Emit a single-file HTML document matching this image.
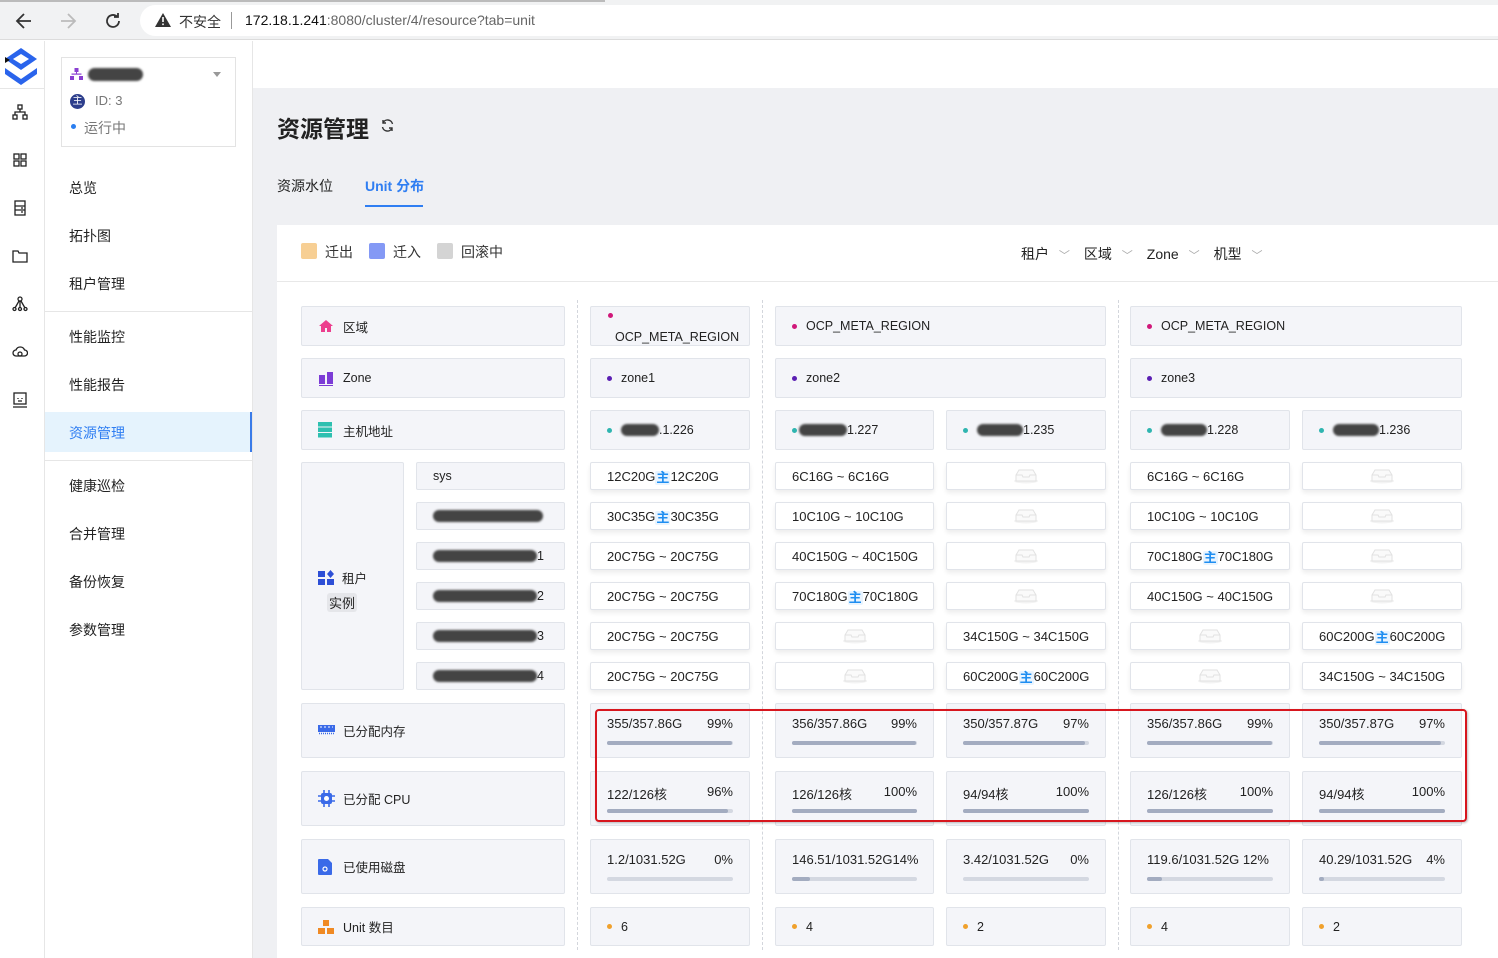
<!DOCTYPE html>
<html><head><meta charset="utf-8">
<style>
*{box-sizing:border-box;margin:0;padding:0}
body{width:1498px;height:958px;overflow:hidden;position:relative;background:#fff;font-family:"Liberation Sans","Noto Sans CJK SC",sans-serif;color:#333;font-size:12px}
.a{position:absolute}
.c{position:absolute;background:#f4f5f9;border:1px solid #e1e4ea;border-radius:2px;display:flex;align-items:center;padding-left:16px;font-size:12.5px;color:#222}
.u{position:absolute;background:#fff;border:1px solid #e1e4ea;border-radius:2px;box-shadow:0 3px 5px rgba(0,0,0,.07);display:flex;align-items:center;justify-content:flex-start;padding-left:16px;font-size:13px;color:#222;white-space:nowrap}
.u.e{justify-content:center;padding-left:0}
.dot{display:inline-block;width:5px;height:5px;border-radius:50%;margin-right:9px}
.blur{display:inline-block;background:#444;border-radius:8px;height:12px;filter:blur(1px)}
.s{position:absolute;background:#f4f5f9;border:1px solid #e1e4ea;border-radius:2px;font-size:13px;color:#222}
.s .t{position:absolute;left:16px;right:16px;top:12px;display:flex;justify-content:space-between}
.s .b{position:absolute;left:16px;right:16px;top:37px;height:4px;background:#d4d8e1;border-radius:2px}
.s .b i{display:block;height:4px;background:#a3acc0;border-radius:2px}
.m{position:absolute;left:69px;font-size:14px;color:#222}
.ri{position:absolute;left:12px;width:16px;height:16px}
.zhu{display:inline-block;color:#1f8ef1;font-weight:bold;font-size:13px;background:#e8f4ff;border-radius:2px;padding:0 1px;line-height:14px;margin-top:4px}
.dash{position:absolute;top:300px;height:650px;border-left:1px dashed #d3d6dc}
</style></head><body>
<div class="a" style="left:0;top:0;width:1498px;height:40px;background:#f1f2f3;border-bottom:1px solid #dcdcdc"></div>
<div class="a" style="left:0;top:0;width:605px;height:2px;background:#bbb"></div>
<div class="a" style="left:140px;top:5px;width:1358px;height:31px;background:#fff;border-radius:16px 0 0 16px"></div>
<svg class="a" style="left:14px;top:11px" width="20" height="20" viewBox="0 0 20 20"><path d="M17 10H4M10 3L3 10l7 7" stroke="#333" stroke-width="1.8" fill="none"/></svg>
<svg class="a" style="left:58px;top:11px" width="20" height="20" viewBox="0 0 20 20"><path d="M3 10h13M10 3l7 7-7 7" stroke="#bbb" stroke-width="1.8" fill="none"/></svg>
<svg class="a" style="left:103px;top:11px" width="20" height="20" viewBox="0 0 20 20"><path d="M16 10a6 6 0 1 1-2-4.5M15 2v4h-4" stroke="#333" stroke-width="1.8" fill="none"/></svg>
<svg class="a" style="left:154px;top:12px" width="18" height="16" viewBox="0 0 18 16"><path d="M9 1L17 15H1z" fill="#333"/><rect x="8.2" y="5" width="1.6" height="5" fill="#fff"/><rect x="8.2" y="11.5" width="1.6" height="1.6" fill="#fff"/></svg>
<div class="a" style="left:179px;top:12px;font-size:14px;color:#333">不安全</div>
<div class="a" style="left:231px;top:12px;width:1px;height:17px;background:#999"></div>
<div class="a" style="left:245px;top:12px;font-size:14px;color:#666"><span style="color:#111">172.18.1.241</span>:8080/cluster/4/resource?tab=unit</div>

<div class="a" style="left:0;top:41px;width:45px;height:917px;background:#fff;border-right:1px solid #e6e6e6"></div>
<svg class="a" style="left:2px;top:46px" width="38" height="40" viewBox="0 0 38 40"><path d="M19 2L35 13 19 24 3 13z" fill="#2a64ec"/><path d="M19 8L27 13 19 18 11 13z" fill="#fff"/><path d="M3 22l16 11 16-11 0 6-16 11L3 28z" fill="#2a64ec"/><path d="M3 11l5 3-5 3z" fill="#111"/></svg>
<div class="a" style="left:0;top:88px;width:44px;height:1px;background:#e6e6e6"></div>
<svg class="ri" style="top:104px" viewBox="0 0 16 16" fill="none" stroke="#222" stroke-width="1.3"><rect x="6" y="1" width="4" height="4"/><rect x="1" y="11" width="4" height="4"/><rect x="11" y="11" width="4" height="4"/><path d="M8 5v3M3 11V8h10v3"/></svg>
<svg class="ri" style="top:152px" viewBox="0 0 16 16" fill="none" stroke="#222" stroke-width="1.3"><rect x="2" y="2" width="5" height="5"/><rect x="9" y="2" width="5" height="5"/><rect x="2" y="9" width="5" height="5"/><rect x="9" y="9" width="5" height="5"/></svg>
<svg class="ri" style="top:200px" viewBox="0 0 16 16" fill="none" stroke="#222" stroke-width="1.3"><rect x="3" y="1" width="10" height="14"/><path d="M3 6h10M3 10h10M9 8h2M9 12h2"/></svg>
<svg class="ri" style="top:248px" viewBox="0 0 16 16" fill="none" stroke="#222" stroke-width="1.3"><path d="M1 3h5l1 2h8v9H1z"/></svg>
<svg class="ri" style="top:296px" viewBox="0 0 16 16" fill="none" stroke="#222" stroke-width="1.3"><circle cx="8" cy="3" r="2"/><circle cx="2.5" cy="13" r="1.5"/><circle cx="13.5" cy="13" r="1.5"/><circle cx="8" cy="13" r="1.5"/><path d="M8 5v6M7 5l-4 7M9 5l4 7"/></svg>
<svg class="ri" style="top:344px" viewBox="0 0 16 16" fill="none" stroke="#222" stroke-width="1.3"><path d="M4 12a3 3 0 0 1 0-6 4.5 4.5 0 0 1 8.5 0 3 3 0 0 1 0 6z"/><circle cx="8" cy="10" r="2"/></svg>
<svg class="ri" style="top:392px" viewBox="0 0 16 16" fill="none" stroke="#222" stroke-width="1.3"><rect x="2" y="1" width="12" height="11"/><path d="M1 15h14M6 6v1M10 6v1M6 9h4"/></svg>

<div class="a" style="left:45px;top:41px;width:208px;height:917px;background:#fff;border-right:1px solid #e6e6e6"></div>
<div class="a" style="left:61px;top:57px;width:175px;height:90px;border:1px solid #e3e3e3"></div>
<svg class="a" style="left:70px;top:68px" width="13" height="13" viewBox="0 0 13 13" fill="#8a3fd1"><rect x="4.5" y="0" width="4" height="4"/><rect x="0" y="8" width="4" height="4"/><rect x="9" y="8" width="4" height="4"/><rect x="1.5" y="5.5" width="10" height="1.2"/><rect x="6" y="3" width="1" height="3"/></svg>
<span class="a blur" style="left:88px;top:68px;width:55px;height:13px"></span>
<div class="a" style="left:213px;top:72px;border:4px solid transparent;border-top:5px solid #999"></div>
<div class="a" style="left:70px;top:94px;width:15px;height:15px;border-radius:50%;background:#2d3e8c;color:#fff;font-size:10px;text-align:center;line-height:15px">主</div>
<div class="a" style="left:95px;top:93px;font-size:13px;color:#777">ID: 3</div>
<div class="a" style="left:71px;top:124px;width:5px;height:5px;border-radius:50%;background:#2a7ef0"></div>
<div class="a" style="left:84px;top:118px;font-size:14px;color:#777">运行中</div>
<div class="m" style="top:178px">总览</div>
<div class="m" style="top:226px">拓扑图</div>
<div class="m" style="top:274px">租户管理</div>
<div class="a" style="left:45px;top:311px;width:207px;height:1px;background:#e6e6e6"></div>
<div class="m" style="top:327px">性能监控</div>
<div class="m" style="top:375px">性能报告</div>
<div class="a" style="left:45px;top:412px;width:207px;height:40px;background:#e5f3fd;border-right:2px solid #3a7be8"></div>
<div class="m" style="top:423px;color:#2f7ef2">资源管理</div>
<div class="a" style="left:45px;top:460px;width:207px;height:1px;background:#e6e6e6"></div>
<div class="m" style="top:476px">健康巡检</div>
<div class="m" style="top:524px">合并管理</div>
<div class="m" style="top:572px">备份恢复</div>
<div class="m" style="top:620px">参数管理</div>

<div class="a" style="left:253px;top:88px;width:1245px;height:870px;background:#eff0f3"></div>
<div class="a" style="left:277px;top:110px;font-size:23px;font-weight:bold;color:#222">资源管理</div>
<svg class="a" style="left:380px;top:118px" width="15" height="15" viewBox="0 0 15 15" fill="none" stroke="#333" stroke-width="1.4"><path d="M12.5 6A5 5 0 0 0 3 5M2.5 9A5 5 0 0 0 12 10"/><path d="M3 2v3h3M12 13v-3H9"/></svg>
<div class="a" style="left:277px;top:176px;font-size:14px;color:#222">资源水位</div>
<div class="a" style="left:365px;top:176px;font-size:14px;color:#2f7ef2;font-weight:bold">Unit 分布</div>
<div class="a" style="left:365px;top:205px;width:58px;height:2px;background:#2f7ef2"></div>

<div class="a" style="left:277px;top:225px;width:1221px;height:733px;background:#fff"></div>
<div class="a" style="left:277px;top:281px;width:1221px;height:1px;background:#e8e8e8"></div>
<div class="a" style="left:301px;top:243px;width:16px;height:16px;background:#f7cf94;border-radius:2px"></div>
<div class="a" style="left:325px;top:242px;font-size:14px">迁出</div>
<div class="a" style="left:369px;top:243px;width:16px;height:16px;background:#8499f5;border-radius:2px"></div>
<div class="a" style="left:393px;top:242px;font-size:14px">迁入</div>
<div class="a" style="left:437px;top:243px;width:16px;height:16px;background:#d4d4d4;border-radius:2px"></div>
<div class="a" style="left:461px;top:242px;font-size:14px">回滚中</div>
<div class="a" style="left:1021px;top:244px;font-size:14px;color:#222">租户 <span style="color:#aaa;font-size:11px;margin:0 14px 0 6px">﹀</span>区域 <span style="color:#aaa;font-size:11px;margin:0 14px 0 6px">﹀</span>Zone <span style="color:#aaa;font-size:11px;margin:0 14px 0 6px">﹀</span>机型 <span style="color:#aaa;font-size:11px;margin-left:6px">﹀</span></div>

<div class="dash" style="left:577px"></div>
<div class="dash" style="left:762px"></div>
<div class="dash" style="left:1118px"></div>

<div class="c" style="left:301px;top:306px;width:264px;height:40px"><svg width="16" height="14" viewBox="0 0 16 14" style="margin-right:9px"><path d="M8 1L1 7h2v6h4V9h2v4h4V7h2z" fill="#ec3f8e"/></svg>区域</div>
<div class="c" style="left:301px;top:358px;width:264px;height:40px"><svg width="16" height="16" viewBox="0 0 16 16" style="margin-right:9px"><rect x="1" y="5" width="6" height="9" fill="#7c3cd6"/><rect x="9" y="2" width="6" height="12" fill="#7c3cd6"/><rect x="1" y="15" width="14" height="1" fill="#7c3cd6"/></svg>Zone</div>
<div class="c" style="left:301px;top:410px;width:264px;height:40px"><svg width="14" height="16" viewBox="0 0 14 16" style="margin-right:11px"><rect x="0" y="0" width="14" height="4.5" fill="#2ec0b0"/><rect x="0" y="5.5" width="14" height="4.5" fill="#2ec0b0"/><rect x="0" y="11" width="14" height="4.5" fill="#2ec0b0"/></svg>主机地址</div>
<div class="c" style="left:301px;top:462px;width:103px;height:228px;display:block;padding:0">
 <div class="a" style="left:16px;top:105px;display:flex;align-items:center"><svg width="16" height="16" viewBox="0 0 16 16" style="margin-right:8px"><rect x="0" y="1" width="7" height="6" fill="#2d4fd6"/><rect x="0" y="9" width="7" height="6" fill="#2d4fd6"/><rect x="9" y="9" width="7" height="6" fill="#2d4fd6"/><path d="M12.5 0l3.5 4-3.5 4-3.5-4z" fill="#2d4fd6"/></svg>租户</div>
 <div class="a" style="left:25px;top:130px;font-size:13px;background:#e5e6ea;border-radius:3px;padding:0 2px">实例</div>
</div>
<div class="c" style="left:416px;top:462px;width:149px;height:28px">sys</div>
<div class="c" style="left:416px;top:502px;width:149px;height:28px"><span class="blur" style="width:110px"></span></div>
<div class="c" style="left:416px;top:542px;width:149px;height:28px"><span class="blur" style="width:104px"></span>1</div>
<div class="c" style="left:416px;top:582px;width:149px;height:28px"><span class="blur" style="width:104px"></span>2</div>
<div class="c" style="left:416px;top:622px;width:149px;height:28px"><span class="blur" style="width:104px"></span>3</div>
<div class="c" style="left:416px;top:662px;width:149px;height:28px"><span class="blur" style="width:104px"></span>4</div>
<div class="c" style="left:301px;top:703px;width:264px;height:55px"><svg width="17" height="11" viewBox="0 0 17 11" style="margin-right:8px"><rect x="0" y="0" width="17" height="7" fill="#3a6ae8"/><path d="M2 2h2M6 2h2M10 2h2M14 2h1" stroke="#fff" stroke-width="1"/><path d="M1 8.5h15" stroke="#3a6ae8" stroke-width="1.5" stroke-dasharray="1 1"/></svg>已分配内存</div>
<div class="c" style="left:301px;top:771px;width:264px;height:55px"><svg width="17" height="17" viewBox="0 0 17 17" style="margin-right:8px"><rect x="3" y="3" width="11" height="11" rx="2" fill="#3a6ae8"/><circle cx="8.5" cy="8.5" r="2.5" fill="#fff"/><path d="M6 0v3M11 0v3M6 14v3M11 14v3M0 6h3M0 11h3M14 6h3M14 11h3" stroke="#3a6ae8" stroke-width="1.6"/></svg>已分配 CPU</div>
<div class="c" style="left:301px;top:839px;width:264px;height:55px"><svg width="15" height="16" viewBox="0 0 15 16" style="margin-right:10px"><path d="M1 0h9l4 4v11a1 1 0 0 1-1 1H1a1 1 0 0 1-1-1V1a1 1 0 0 1 1-1z" fill="#3a6ae8"/><circle cx="7" cy="10" r="2" fill="none" stroke="#fff" stroke-width="1.2"/></svg>已使用磁盘</div>
<div class="c" style="left:301px;top:907px;width:264px;height:39px"><svg width="16" height="14" viewBox="0 0 16 14" style="margin-right:9px"><rect x="5" y="0" width="6" height="6" fill="#f08a24"/><rect x="0" y="8" width="7" height="6" fill="#f08a24"/><rect x="9" y="8" width="7" height="6" fill="#f08a24"/></svg>Unit 数目</div>

<div class="c" style="left:590px;top:306px;width:160px;height:40px;display:block;padding:0"><span class="dot a" style="left:17px;top:6px;background:#d0187a"></span><span class="a" style="left:24px;top:23px">OCP_META_REGION</span></div>
<div class="c" style="left:775px;top:306px;width:331px;height:40px"><span class="dot" style="background:#d0187a"></span>OCP_META_REGION</div>
<div class="c" style="left:1130px;top:306px;width:332px;height:40px"><span class="dot" style="background:#d0187a"></span>OCP_META_REGION</div>
<div class="c" style="left:590px;top:358px;width:160px;height:40px"><span class="dot" style="background:#5b1fb3"></span>zone1</div>
<div class="c" style="left:775px;top:358px;width:331px;height:40px"><span class="dot" style="background:#5b1fb3"></span>zone2</div>
<div class="c" style="left:1130px;top:358px;width:332px;height:40px"><span class="dot" style="background:#5b1fb3"></span>zone3</div>
<div class="c" style="left:590px;top:410px;width:160px;height:40px"><span class="dot" style="background:#2fb5b0"></span><span class="blur" style="width:38px"></span>.1.226</div>
<div class="c" style="left:775px;top:410px;width:159px;height:40px"><span class="dot" style="background:#2fb5b0;margin-right:2px"></span><span class="blur" style="width:48px"></span>1.227</div>
<div class="c" style="left:946px;top:410px;width:160px;height:40px"><span class="dot" style="background:#2fb5b0"></span><span class="blur" style="width:46px"></span>1.235</div>
<div class="c" style="left:1130px;top:410px;width:160px;height:40px"><span class="dot" style="background:#2fb5b0"></span><span class="blur" style="width:46px"></span>1.228</div>
<div class="c" style="left:1302px;top:410px;width:160px;height:40px"><span class="dot" style="background:#2fb5b0"></span><span class="blur" style="width:46px"></span>1.236</div>

<svg width="0" height="0" style="position:absolute"><defs><symbol id="e" viewBox="0 0 26 16"><ellipse cx="13" cy="13" rx="12" ry="2.5" fill="#f3f3f3"/><path d="M3 7l3-5h14l3 5v6H3z" fill="#fafafa" stroke="#e2e2e2"/><path d="M3 7h6l1 2h6l1-2h6" fill="none" stroke="#e2e2e2"/></symbol></defs></svg>
<div class="u" style="left:590px;top:462px;width:160px;height:28px">12C20G<span class="zhu">主</span>12C20G</div>
<div class="u" style="left:590px;top:502px;width:160px;height:28px">30C35G <span class="zhu">主</span>30C35G</div>
<div class="u" style="left:590px;top:542px;width:160px;height:28px">20C75G ~ 20C75G</div>
<div class="u" style="left:590px;top:582px;width:160px;height:28px">20C75G ~ 20C75G</div>
<div class="u" style="left:590px;top:622px;width:160px;height:28px">20C75G ~ 20C75G</div>
<div class="u" style="left:590px;top:662px;width:160px;height:28px">20C75G ~ 20C75G</div>
<div class="u" style="left:775px;top:462px;width:159px;height:28px">6C16G ~ 6C16G</div>
<div class="u" style="left:775px;top:502px;width:159px;height:28px">10C10G ~ 10C10G</div>
<div class="u" style="left:775px;top:542px;width:159px;height:28px">40C150G ~ 40C150G</div>
<div class="u" style="left:775px;top:582px;width:159px;height:28px">70C180G<span class="zhu">主</span>70C180G</div>
<div class="u e" style="left:775px;top:622px;width:159px;height:28px"><svg width="26" height="16"><use href="#e"/></svg></div>
<div class="u e" style="left:775px;top:662px;width:159px;height:28px"><svg width="26" height="16"><use href="#e"/></svg></div>
<div class="u e" style="left:946px;top:462px;width:160px;height:28px"><svg width="26" height="16"><use href="#e"/></svg></div>
<div class="u e" style="left:946px;top:502px;width:160px;height:28px"><svg width="26" height="16"><use href="#e"/></svg></div>
<div class="u e" style="left:946px;top:542px;width:160px;height:28px"><svg width="26" height="16"><use href="#e"/></svg></div>
<div class="u e" style="left:946px;top:582px;width:160px;height:28px"><svg width="26" height="16"><use href="#e"/></svg></div>
<div class="u" style="left:946px;top:622px;width:160px;height:28px">34C150G ~ 34C150G</div>
<div class="u" style="left:946px;top:662px;width:160px;height:28px">60C200G<span class="zhu">主</span>60C200G</div>
<div class="u" style="left:1130px;top:462px;width:160px;height:28px">6C16G ~ 6C16G</div>
<div class="u" style="left:1130px;top:502px;width:160px;height:28px">10C10G ~ 10C10G</div>
<div class="u" style="left:1130px;top:542px;width:160px;height:28px">70C180G<span class="zhu">主</span>70C180G</div>
<div class="u" style="left:1130px;top:582px;width:160px;height:28px">40C150G ~ 40C150G</div>
<div class="u e" style="left:1130px;top:622px;width:160px;height:28px"><svg width="26" height="16"><use href="#e"/></svg></div>
<div class="u e" style="left:1130px;top:662px;width:160px;height:28px"><svg width="26" height="16"><use href="#e"/></svg></div>
<div class="u e" style="left:1302px;top:462px;width:160px;height:28px"><svg width="26" height="16"><use href="#e"/></svg></div>
<div class="u e" style="left:1302px;top:502px;width:160px;height:28px"><svg width="26" height="16"><use href="#e"/></svg></div>
<div class="u e" style="left:1302px;top:542px;width:160px;height:28px"><svg width="26" height="16"><use href="#e"/></svg></div>
<div class="u e" style="left:1302px;top:582px;width:160px;height:28px"><svg width="26" height="16"><use href="#e"/></svg></div>
<div class="u" style="left:1302px;top:622px;width:160px;height:28px">60C200G<span class="zhu">主</span>60C200G</div>
<div class="u" style="left:1302px;top:662px;width:160px;height:28px">34C150G ~ 34C150G</div>

<div class="s" style="left:590px;top:703px;width:160px;height:55px"><div class="t"><span>355/357.86G</span><span>99%</span></div><div class="b"><i style="width:99%"></i></div></div>
<div class="s" style="left:775px;top:703px;width:159px;height:55px"><div class="t"><span>356/357.86G</span><span>99%</span></div><div class="b"><i style="width:99%"></i></div></div>
<div class="s" style="left:946px;top:703px;width:160px;height:55px"><div class="t"><span>350/357.87G</span><span>97%</span></div><div class="b"><i style="width:97%"></i></div></div>
<div class="s" style="left:1130px;top:703px;width:160px;height:55px"><div class="t"><span>356/357.86G</span><span>99%</span></div><div class="b"><i style="width:99%"></i></div></div>
<div class="s" style="left:1302px;top:703px;width:160px;height:55px"><div class="t"><span>350/357.87G</span><span>97%</span></div><div class="b"><i style="width:97%"></i></div></div>
<div class="s" style="left:590px;top:771px;width:160px;height:55px"><div class="t"><span>122/126核</span><span>96%</span></div><div class="b"><i style="width:96%"></i></div></div>
<div class="s" style="left:775px;top:771px;width:159px;height:55px"><div class="t"><span>126/126核</span><span>100%</span></div><div class="b"><i style="width:100%"></i></div></div>
<div class="s" style="left:946px;top:771px;width:160px;height:55px"><div class="t"><span>94/94核</span><span>100%</span></div><div class="b"><i style="width:100%"></i></div></div>
<div class="s" style="left:1130px;top:771px;width:160px;height:55px"><div class="t"><span>126/126核</span><span>100%</span></div><div class="b"><i style="width:100%"></i></div></div>
<div class="s" style="left:1302px;top:771px;width:160px;height:55px"><div class="t"><span>94/94核</span><span>100%</span></div><div class="b"><i style="width:100%"></i></div></div>
<div class="s" style="left:590px;top:839px;width:160px;height:55px"><div class="t"><span>1.2/1031.52G</span><span>0%</span></div><div class="b"><i style="width:0"></i></div></div>
<div class="s" style="left:775px;top:839px;width:159px;height:55px"><div class="t" style="right:8px"><span>146.51/1031.52G14%</span></div><div class="b"><i style="width:14%"></i></div></div>
<div class="s" style="left:946px;top:839px;width:160px;height:55px"><div class="t"><span>3.42/1031.52G</span><span>0%</span></div><div class="b"><i style="width:0"></i></div></div>
<div class="s" style="left:1130px;top:839px;width:160px;height:55px"><div class="t"><span>119.6/1031.52G 12%</span></div><div class="b"><i style="width:12%"></i></div></div>
<div class="s" style="left:1302px;top:839px;width:160px;height:55px"><div class="t"><span>40.29/1031.52G</span><span>4%</span></div><div class="b"><i style="width:4%"></i></div></div>
<div class="c" style="left:590px;top:907px;width:160px;height:39px"><span class="dot" style="background:#f0a12c"></span>6</div>
<div class="c" style="left:775px;top:907px;width:159px;height:39px"><span class="dot" style="background:#f0a12c"></span>4</div>
<div class="c" style="left:946px;top:907px;width:160px;height:39px"><span class="dot" style="background:#f0a12c"></span>2</div>
<div class="c" style="left:1130px;top:907px;width:160px;height:39px"><span class="dot" style="background:#f0a12c"></span>4</div>
<div class="c" style="left:1302px;top:907px;width:160px;height:39px"><span class="dot" style="background:#f0a12c"></span>2</div>

<div class="a" style="left:595px;top:709px;width:872px;height:113px;border:2px solid #d7161e;border-radius:4px;box-shadow:1px 1px 2px rgba(0,0,0,.25)"></div>
</body></html>
